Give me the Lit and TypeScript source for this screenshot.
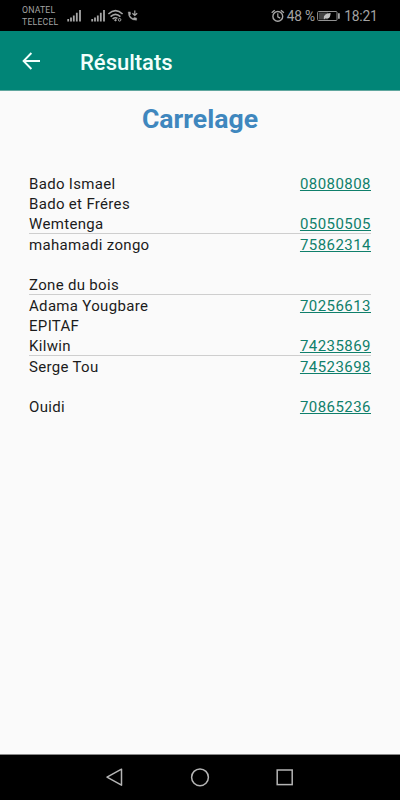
import { LitElement, html, css, svg, nothing } from "lit";
import { customElement } from "lit/decorators.js";

interface Entry {
  lines: string[];
  phones: string[];
}

const entries: Entry[] = [
  { lines: ["Bado Ismael", "Bado et Fréres", "Wemtenga"], phones: ["08080808", "", "05050505"] },
  { lines: ["mahamadi zongo", "", "Zone du bois"], phones: ["75862314", "", ""] },
  { lines: ["Adama Yougbare", "EPITAF", "Kilwin"], phones: ["70256613", "", "74235869"] },
  { lines: ["Serge Tou", "", "Ouidi"], phones: ["74523698", "", "70865236"] },
];

const bars = (x: number) => svg`
  <path d="M${x} 19v2.4M${x + 2.8} 17.4v4M${x + 5.6} 15.4v6M${x + 8.6} 12.8v8.6M${x + 11.8} 10v11.4"
    stroke="#a6a6a6" stroke-width="1.8"/>`;

@customElement("status-bar")
class StatusBar extends LitElement {
  static styles = css`
    :host {
      display: flex;
      height: 31px;
      background: #000;
      color: #a3a3a3;
      box-sizing: border-box;
      padding-left: 22px;
    }
    .carrier {
      width: 45px;
      padding-top: 5px;
      font-size: 8.7px;
      line-height: 11.5px;
      letter-spacing: 0.2px;
      white-space: nowrap;
    }
    svg { display: block; flex: none; }
    .right { margin-left: auto; display: flex; padding-right: 22.5px; }
    .txt { font-size: 13.8px; line-height: 32px; white-space: nowrap; letter-spacing: -0.2px; }
    .pct { width: 29.5px; }
  `;
  render() {
    return html`
      <div class="carrier"><div>ONATEL</div><div>TELECEL</div></div>
      <svg width="75" height="31" viewBox="67 0 75 31" fill="none">
        ${bars(68.2)}${bars(92.2)}
        <g stroke="#a6a6a6" stroke-width="1.6">
          <path d="M108.4 14Q115.5 7.4 122.6 14"/>
          <path d="M110.6 16.7Q115.5 12.2 120.4 16.7"/>
          <path d="M112.6 19Q115.3 16.8 117.4 18.4"/>
        </g>
        <path d="M114 20.2l1.7-1.4 1.2 1.4-1.3 1.4z" fill="#a6a6a6"/>
        <circle cx="119.6" cy="19.8" r="1.3" stroke="#a6a6a6"/>
        <path d="M128.2 11.9h2.1l.4 2.3-1 1.1q1.2 2.1 3.3 3.3l1.2-1.1 2.4.5v2.2Q128.4 20.4 128.2 11.9z" fill="#a6a6a6" stroke="#a6a6a6" stroke-width=".4"/>
        <path d="M134.8 10.4v5.2M132.4 13.2l2.4 2.3 2.4-2.3" stroke="#a6a6a6" stroke-width="1.2"/>
      </svg>
      <div class="right">
        <svg width="15.5" height="31" viewBox="272 0 15.5 31" fill="none" stroke="#a6a6a6">
          <circle cx="278.8" cy="16.4" r="4.9" stroke-width="1.4"/>
          <path d="M278.8 13.2v3.6l2.4 1.3" stroke-width="1.2"/>
          <path d="M272.7 12.7l3-2.5M284.9 12.7l-3-2.5" stroke-width="1.4"/>
        </svg>
        <div class="txt pct">48 %</div>
        <svg width="28" height="31" viewBox="317 0 28 31" fill="none">
          <rect x="318.6" y="11.5" width="19.4" height="9" rx="1" stroke="#929292"/>
          <rect x="320" y="12.5" width="9" height="7" fill="#424242"/>
          <path d="M339 13.3h1.8v5.4H339z" fill="#a6a6a6"/>
          <path d="M324.8 18.8Q324 13.6 331.6 13Q331.6 19.6 326.4 18.3L325 19.5z" fill="#c0c0c0"/>
        </svg>
        <div class="txt">18:21</div>
      </div>`;
  }
}

@customElement("top-bar")
class TopBar extends LitElement {
  static styles = css`
    :host {
      display: flex;
      align-items: center;
      height: 60px;
      box-sizing: border-box;
      padding: 1px 0 0 21px;
      gap: 39px;
      background: #018577;
      border-bottom: 1px solid #5fa69e;
      color: #f2fffc;
      font-size: 22px;
      font-weight: 500;
    }
    svg { display: block; }
    div { padding-top: 2px; }
  `;
  render() {
    return html`
      <svg width="20" height="20" viewBox="0 0 20 20" fill="none" stroke="#f2fffc" stroke-width="1.9">
        <path d="M19 10H2.8M10.4 2L2.6 10l7.8 8"/>
      </svg>
      <div>Résultats</div>`;
  }
}

@customElement("contact-entry")
class ContactEntry extends LitElement {
  static properties = { entry: { attribute: false } };
  declare entry: Entry;
  static styles = css`
    :host {
      display: block;
      font-size: 15px;
      line-height: 22px;
      letter-spacing: 0.32px;
      color: #1c1c1c;
    }
    .line { display: flex; justify-content: space-between; height: 20px; }
    .phone {
      color: #0f7f6b;
      text-decoration: underline;
      text-decoration-thickness: 1px;
      text-underline-offset: 1px;
      letter-spacing: 0.45px;
    }
  `;
  render() {
    return this.entry.lines.map((line, i) => html`
      <div class="line">
        <span>${line}</span>
        ${this.entry.phones[i] ? html`<a class="phone">${this.entry.phones[i]}</a>` : nothing}
      </div>`);
  }
}

@customElement("nav-bar")
class NavBar extends LitElement {
  static styles = css`
    :host {
      display: flex;
      justify-content: center;
      height: 46px;
      box-sizing: border-box;
      background: #000;
      border-top: 1px solid #8a8a8a;
    }
    svg { display: block; }
  `;
  render() {
    return html`
      <svg width="400" height="45" viewBox="0 755 400 45" fill="none" stroke="#b5b5b5" stroke-width="1.5">
        <path d="M121.5 769.2v16L107 777.2z" stroke-linejoin="round"/>
        <circle cx="200" cy="777.3" r="8.4"/>
        <rect x="277.2" y="770" width="15" height="14.6"/>
      </svg>`;
  }
}

@customElement("app-root")
class AppRoot extends LitElement {
  static styles = css`
    :host {
      display: flex;
      flex-direction: column;
      height: 800px;
      overflow: hidden;
      background: #fafafa;
      font-family: Roboto, "Liberation Sans", sans-serif;
    }
    main { flex: 1; padding: 9px 29px 0; }
    h1 {
      margin: 0 0 35px;
      height: 38px;
      line-height: 38px;
      text-align: center;
      font-size: 26.6px;
      font-weight: 700;
      color: #3f87be;
    }
    contact-entry + contact-entry { border-top: 1px solid #cecece; }
  `;
  render() {
    return html`
      <status-bar></status-bar>
      <top-bar></top-bar>
      <main>
        <h1>Carrelage</h1>
        ${entries.map((e) => html`<contact-entry .entry=${e}></contact-entry>`)}
      </main>
      <nav-bar></nav-bar>`;
  }
}
